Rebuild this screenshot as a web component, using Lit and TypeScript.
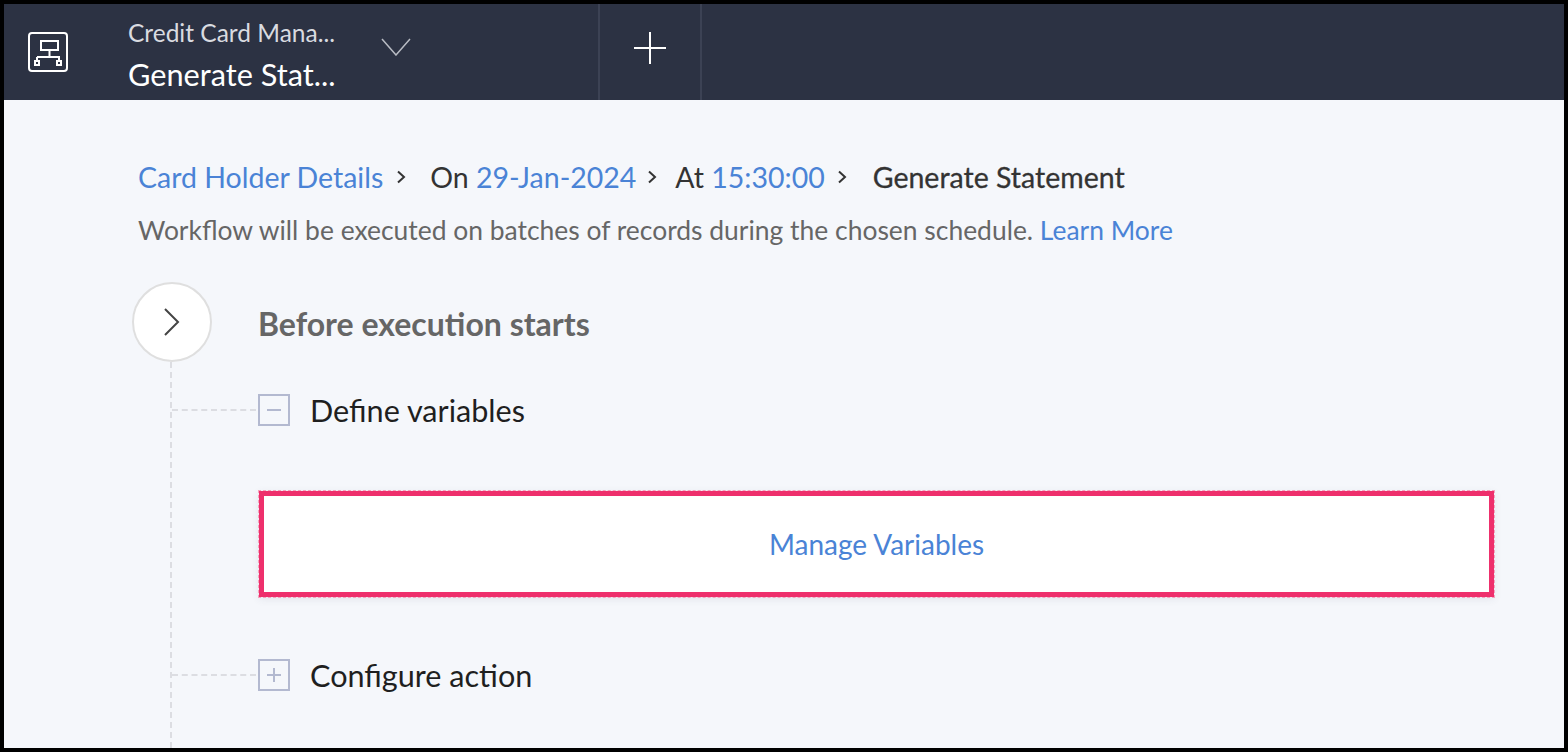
import { LitElement, html, css } from "lit";
import { customElement } from "lit/decorators.js";

@customElement("app-root")
export class AppRoot extends LitElement {
  static styles = css`
    :host { display: block; width: 1568px; height: 752px; }
    * { box-sizing: border-box; }
    .frame { width: 1568px; height: 752px; border: 4px solid #000; background: #f5f7fb; font-family: Lato, "Open Sans", sans-serif; overflow: hidden; display: flex; flex-direction: column; }
    .bar { height: 96px; background: #2c3243; display: flex; align-items: stretch; flex: none; }
    .logo { width: 124px; padding-left: 24px; display: flex; align-items: center; flex: none; }
    .logo svg { display: block; width: 40px; height: 40px; }
    .titles { width: 208px; flex: none; display: flex; flex-direction: column; }
    .t1 { font-size: 24.5px; line-height: 30px; margin-top: 14px; color: #d9dbe0; white-space: nowrap; }
    .t2 { font-size: 30.7px; line-height: 38px; margin-top: 8px; color: #fff; white-space: nowrap; }
    .chev { width: 262px; flex: none; padding-left: 45px; display: flex; align-items: center; }
    .chev svg { display: block; margin-top: -10px; }
    .plus { width: 104px; flex: none; border-left: 2px solid #3c4254; border-right: 2px solid #3c4254; display: flex; align-items: center; justify-content: center; }
    .plus svg { display: block; margin-top: -8px; }
    .body { flex: 1; padding: 59px 70px 0 128px; min-height: 0; }
    .crumbs { margin-left: 6px; display: flex; align-items: center; font-size: 28.5px; line-height: 36px; color: #333; white-space: nowrap; }
    .crumbs a, .note a { color: #4a83d6; text-decoration: none; }
    .crumbs svg { display: block; flex: none; }
    .c1 { margin-right: 13px; }
    .c2 { margin-left: 22px; margin-right: 11px; }
    .c3 { margin-left: 16px; margin-right: 12px; }
    .c4 { margin-left: 24px; -webkit-text-stroke: 0.3px #333; }
    .note { margin-left: 6px; margin-top: 17px; font-size: 26.45px; line-height: 36px; color: #666; white-space: nowrap; }
    .tree { position: relative; margin-top: 34px; padding-left: 126px; height: 466px; }
    .tree::before { content: ""; position: absolute; left: 38px; top: 80px; bottom: 0; border-left: 2px dashed #dcdde2; }
    .circle { position: absolute; left: 0; top: 0; width: 80px; height: 80px; border-radius: 50%; background: #fff; border: 2px solid #dfdfdf; display: flex; align-items: center; justify-content: center; }
    .head { height: 80px; padding-top: 2px; display: flex; align-items: center; font-size: 32px; font-weight: 700; color: #666; }
    .step { position: relative; display: flex; align-items: center; gap: 20px; height: 32px; font-size: 30.6px; color: #1f1f1f; }
    .step::before { content: ""; position: absolute; left: -86px; width: 84px; top: 15px; border-top: 2px dashed #dcdde2; }
    .s1 { margin-top: 32px; }
    .s2 { margin-top: 62px; }
    .tog { width: 32px; height: 32px; flex: none; border: 2px solid #b3b9d0; display: flex; align-items: center; justify-content: center; }
    .tog svg { display: block; }
    .card { margin-top: 65px; margin-left: 1px; height: 106px; border: 5px solid #ee2f6c; outline: 1px dashed #f5a3bd; background: #fff; box-shadow: 0 2px 8px rgba(60,70,100,.1); display: flex; align-items: center; justify-content: center; font-size: 28px; color: #4a83d6; }
  `;

  private sep() {
    return html`<svg width="12" height="16" viewBox="0 0 12 16" fill="none" stroke="#333" stroke-width="2"><path d="M2 2.5 L8 8 L2 13.5"/></svg>`;
  }

  render() {
    return html`<div class="frame">
      <div class="bar">
        <div class="logo">
          <svg viewBox="0 0 40 40" fill="none" stroke="#fff" stroke-width="2">
            <rect x="1" y="1" width="38" height="38" rx="3"/>
            <path d="M13 9 H30 V18 H13 Z M21.500 18 V25 M9 25 H31 V28 M9 25 V28"/>
            <rect x="7" y="29" width="4" height="4"/>
            <rect x="29" y="29" width="4" height="4"/>
          </svg>
        </div>
        <div class="titles">
          <div class="t1">Credit Card Mana...</div>
          <div class="t2">Generate Stat...</div>
        </div>
        <div class="chev">
          <svg width="30" height="18" viewBox="0 0 30 18" fill="none" stroke="#b9bcc4" stroke-width="1.500"><path d="M1 1 L15 17 L29 1"/></svg>
        </div>
        <div class="plus">
          <svg width="32" height="32" viewBox="0 0 32 32" fill="none" stroke="#fff" stroke-width="2"><path d="M16 0 V32 M0 16 H32"/></svg>
        </div>
      </div>
      <div class="body">
        <div class="crumbs">
          <a class="c1">Card Holder Details</a>${this.sep()}
          <span class="c2">On <a>29-Jan-2024</a></span>${this.sep()}
          <span class="c3">At <a>15:30:00</a></span>${this.sep()}
          <span class="c4">Generate Statement</span>
        </div>
        <div class="note">Workflow will be executed on batches of records during the chosen schedule. <a>Learn More</a></div>
        <div class="tree">
          <div class="circle">
            <svg width="18" height="28" viewBox="0 0 18 28" fill="none" stroke="#444" stroke-width="2"><path d="M2 1 L15 14 L2 27"/></svg>
          </div>
          <div class="head">Before execution starts</div>
          <div class="step s1">
            <span class="tog"><svg width="16" height="16" viewBox="0 0 16 16" stroke="#b3b9d0" stroke-width="2"><path d="M1 8 H15"/></svg></span>
            Define variables
          </div>
          <div class="card">Manage Variables</div>
          <div class="step s2">
            <span class="tog"><svg width="16" height="16" viewBox="0 0 16 16" stroke="#b3b9d0" stroke-width="2"><path d="M1 8 H15 M8 1 V15"/></svg></span>
            Configure action
          </div>
        </div>
      </div>
    </div>`;
  }
}
